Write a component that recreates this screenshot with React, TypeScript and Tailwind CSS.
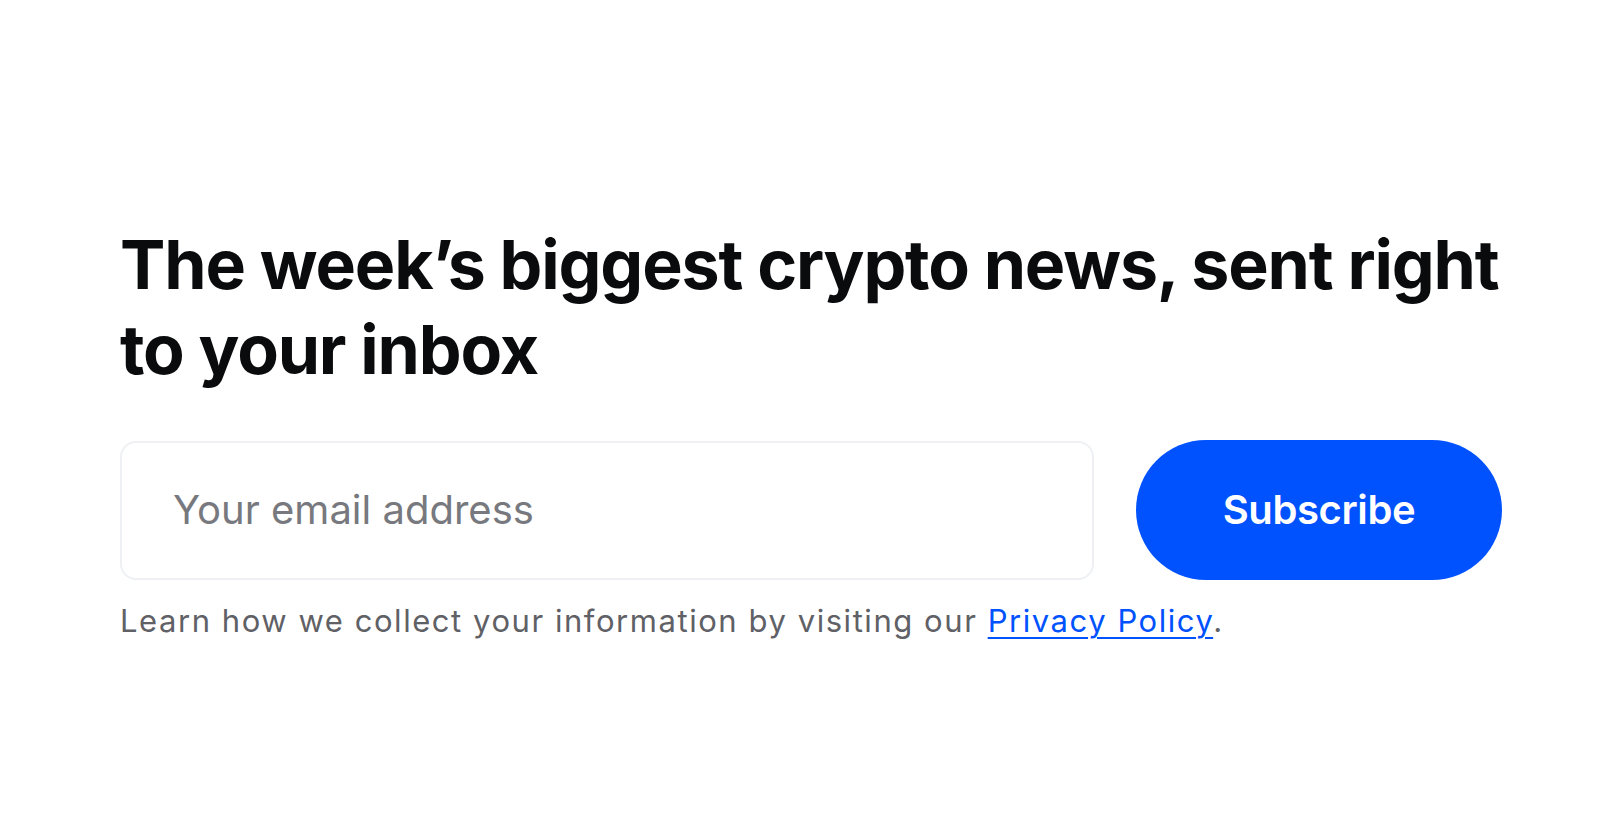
export default function App() {
  return (
    <div className="min-h-[817px] w-full bg-white" style={{ fontFamily: "Inter, 'Noto Sans', sans-serif" }}>
      <div className="pl-[120px] pt-[222px] w-[1502px]">
        <h1 className="text-[68px] leading-[85px] font-bold tracking-[-0.017em] text-[#0a0b0d]">
          The week’s biggest crypto news, sent right to your inbox
        </h1>
        <div className="mt-[48px] flex items-center gap-[42px]">
          <div className="h-[139px] w-[974px] rounded-[16px] border-2 border-[#eef0f3] flex items-center pl-[51px]">
            <span className="text-[40px] text-[#77797e] tracking-[0em]">Your email address</span>
          </div>
          <button className="h-[140px] w-[366px] rounded-full bg-[#0052ff] text-white text-[40px] font-semibold tracking-[-0.01em]">
            Subscribe
          </button>
        </div>
        <p className="mt-[21px] text-[31px] leading-[40px] text-[#5f6166] tracking-[0.05em]">
          Learn how we collect your information by visiting our{" "}
          <a className="text-[#0052ff] underline underline-offset-[5px] decoration-2">Privacy Policy</a>.
        </p>
      </div>
    </div>
  );
}
